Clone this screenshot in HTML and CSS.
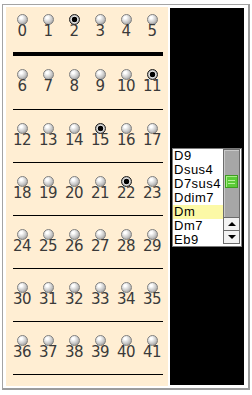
FILE: index.html
```
<!DOCTYPE html>
<html lang="en">
<head>
    <meta charset="UTF-8">
    <title>Chord Frets</title>
    <link rel="stylesheet" href="styles.css">
</head>
<body>
    <div class="frame">
        <div class="board">
            <div class="group first">
                <div class="cells">
                    <div class="cell"><span class="radio"></span><span class="num">0</span></div>
                    <div class="cell"><span class="radio"></span><span class="num">1</span></div>
                    <div class="cell"><span class="radio on"></span><span class="num">2</span></div>
                    <div class="cell"><span class="radio"></span><span class="num">3</span></div>
                    <div class="cell"><span class="radio"></span><span class="num">4</span></div>
                    <div class="cell"><span class="radio"></span><span class="num">5</span></div>
                </div>
                <div class="rule thick"></div>
            </div>
            <div class="group second">
                <div class="cells">
                    <div class="cell"><span class="radio"></span><span class="num">6</span></div>
                    <div class="cell"><span class="radio"></span><span class="num">7</span></div>
                    <div class="cell"><span class="radio"></span><span class="num">8</span></div>
                    <div class="cell"><span class="radio"></span><span class="num">9</span></div>
                    <div class="cell"><span class="radio"></span><span class="num">10</span></div>
                    <div class="cell"><span class="radio on"></span><span class="num">11</span></div>
                </div>
                <div class="rule"></div>
            </div>
            <div class="group">
                <div class="cells">
                    <div class="cell"><span class="radio"></span><span class="num">12</span></div>
                    <div class="cell"><span class="radio"></span><span class="num">13</span></div>
                    <div class="cell"><span class="radio"></span><span class="num">14</span></div>
                    <div class="cell"><span class="radio on"></span><span class="num">15</span></div>
                    <div class="cell"><span class="radio"></span><span class="num">16</span></div>
                    <div class="cell"><span class="radio"></span><span class="num">17</span></div>
                </div>
                <div class="rule"></div>
            </div>
            <div class="group">
                <div class="cells">
                    <div class="cell"><span class="radio"></span><span class="num">18</span></div>
                    <div class="cell"><span class="radio"></span><span class="num">19</span></div>
                    <div class="cell"><span class="radio"></span><span class="num">20</span></div>
                    <div class="cell"><span class="radio"></span><span class="num">21</span></div>
                    <div class="cell"><span class="radio on"></span><span class="num">22</span></div>
                    <div class="cell"><span class="radio"></span><span class="num">23</span></div>
                </div>
                <div class="rule"></div>
            </div>
            <div class="group">
                <div class="cells">
                    <div class="cell"><span class="radio"></span><span class="num">24</span></div>
                    <div class="cell"><span class="radio"></span><span class="num">25</span></div>
                    <div class="cell"><span class="radio"></span><span class="num">26</span></div>
                    <div class="cell"><span class="radio"></span><span class="num">27</span></div>
                    <div class="cell"><span class="radio"></span><span class="num">28</span></div>
                    <div class="cell"><span class="radio"></span><span class="num">29</span></div>
                </div>
                <div class="rule"></div>
            </div>
            <div class="group">
                <div class="cells">
                    <div class="cell"><span class="radio"></span><span class="num">30</span></div>
                    <div class="cell"><span class="radio"></span><span class="num">31</span></div>
                    <div class="cell"><span class="radio"></span><span class="num">32</span></div>
                    <div class="cell"><span class="radio"></span><span class="num">33</span></div>
                    <div class="cell"><span class="radio"></span><span class="num">34</span></div>
                    <div class="cell"><span class="radio"></span><span class="num">35</span></div>
                </div>
                <div class="rule"></div>
            </div>
            <div class="group">
                <div class="cells">
                    <div class="cell"><span class="radio"></span><span class="num">36</span></div>
                    <div class="cell"><span class="radio"></span><span class="num">37</span></div>
                    <div class="cell"><span class="radio"></span><span class="num">38</span></div>
                    <div class="cell"><span class="radio"></span><span class="num">39</span></div>
                    <div class="cell"><span class="radio"></span><span class="num">40</span></div>
                    <div class="cell"><span class="radio"></span><span class="num">41</span></div>
                </div>
                <div class="rule"></div>
            </div>
        </div>

        <div class="side">
            <div class="chords">
                <ul class="items">
                    <li>D9</li>
                    <li>Dsus4</li>
                    <li>D7sus4</li>
                    <li>Ddim7</li>
                    <li class="picked">Dm</li>
                    <li>Dm7</li>
                    <li>Eb9</li>
                </ul>
                <div class="scroll">
                    <div class="track"><div class="thumb"></div></div>
                    <div class="btn up"></div>
                    <div class="btn down"></div>
                </div>
            </div>
        </div>
    </div>
</body>
</html>
```

FILE: styles.css
```
body {
    margin: 0;
    background: #FFFFFF;
    font-family: "DejaVu Sans", sans-serif;
}
.frame {
    display: flex;
    align-items: flex-start;
    gap: 2px;
    width: 240px;
    margin: 4px 0 0 2px;
    padding: 2px 2px 2px 3px;
    background: #FFFFFF;
    border-top: 1px solid #A4A4A4;
    border-left: 1px solid #A4A4A4;
    border-right: 2px solid #9C9C9C;
    border-bottom: 2px solid #9C9C9C;
}
.board {
    width: 162px;
    height: 379px;
    background: #FFEED3;
    flex-shrink: 0;
}
.group {
    padding-top: 13px;
}
.group.first {
    padding-top: 7px;
}
.cells {
    display: grid;
    grid-template-columns: repeat(6, 26px);
    padding-left: 3px;
    height: 39px;
}
.group.first .cells {
    height: 38px;
}
.group.second .cells {
    height: 40px;
}
.cell {
    display: flex;
    flex-direction: column;
    align-items: center;
}
.radio {
    width: 9px;
    height: 9px;
    border: 1px solid #808080;
    border-radius: 50%;
    background: radial-gradient(circle at 36% 30%, #FFFFFF 0, #FFFFFF 12%, #C9C9C9 55%, #858585 100%);
}
.radio.on {
    border-color: #1E1E1E;
    background: radial-gradient(circle at 50% 50%, #000000 0, #000000 2.5px, #E6E6E6 3.1px, #ABABAB 4.5px);
}
.num {
    margin-top: -1px;
    font-size: 15px;
    line-height: 15px;
    letter-spacing: -0.5px;
    color: #3A3A3A;
}
.rule {
    height: 1px;
    margin: 0 5px 0 7px;
    background: #000000;
}
.rule.thick {
    height: 4px;
}
.side {
    width: 74px;
    height: 377px;
    margin-top: 1px;
    background: #000000;
    flex-shrink: 0;
    padding-top: 140px;
    box-sizing: border-box;
}
.chords {
    display: flex;
    width: 68px;
    height: 97px;
    margin-left: 2px;
    background: #FFFFFF;
    border: 1px solid #7A7A7A;
    overflow: hidden;
}
.items {
    list-style: none;
    margin: 0;
    padding: 0;
    width: 50px;
    font-family: "Liberation Sans", Arial, sans-serif;
    font-size: 13px;
    letter-spacing: 0.5px;
    color: #000000;
}
.items li {
    height: 14px;
    line-height: 14px;
    padding-left: 1px;
    white-space: nowrap;
    overflow: hidden;
}
.items li.picked {
    background: #FCF9A6;
}
.scroll {
    width: 17px;
    display: flex;
    flex-direction: column;
}
.track {
    height: 67px;
    background: #A7A7A7;
    border: 1px solid #6C6C6C;
    box-shadow: inset 1px 1px 0 #C9C9C9;
}
.thumb {
    width: 11px;
    height: 11px;
    margin: 25px 0 0 1px;
    background: #5BCB38 repeating-linear-gradient(to bottom, transparent 0 2px, #B6F29A 2px 3px) center / 7px 7px no-repeat;
    border: 1px solid #3E9C22;
    box-shadow: inset 1px 1px 0 #A6EE85;
}
.btn {
    height: 12px;
    border: 1px solid #6C6C6C;
    border-top: none;
    background: #F2F2F2;
    display: flex;
    align-items: center;
    justify-content: center;
}
.btn::after {
    content: "";
    border-left: 4px solid transparent;
    border-right: 4px solid transparent;
}
.btn.up::after {
    border-bottom: 4px solid #000000;
}
.btn.down::after {
    border-top: 4px solid #000000;
}
```
